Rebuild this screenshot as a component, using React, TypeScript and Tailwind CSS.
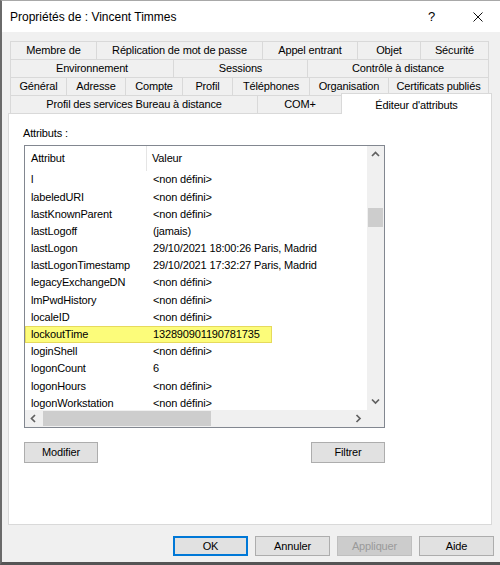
import React from "react";

type Tab = { label: string; w: string; selected?: boolean };

const rows: Tab[][] = [
  [
    { label: "Membre de", w: "w-[87px]" },
    { label: "Réplication de mot de passe", w: "w-[166px]" },
    { label: "Appel entrant", w: "w-[95px]" },
    { label: "Objet", w: "w-[63px]" },
    { label: "Sécurité", w: "w-[68px]" },
  ],
  [
    { label: "Environnement", w: "w-[164px]" },
    { label: "Sessions", w: "w-[134px]" },
    { label: "Contrôle à distance", w: "w-[181px]" },
  ],
  [
    { label: "Général", w: "w-[57px]" },
    { label: "Adresse", w: "w-[59px]" },
    { label: "Compte", w: "w-[57px]" },
    { label: "Profil", w: "w-[50px]" },
    { label: "Téléphones", w: "w-[77px]" },
    { label: "Organisation", w: "w-[79px]" },
    { label: "Certificats publiés", w: "w-[100px]" },
  ],
  [
    { label: "Profil des services Bureau à distance", w: "w-[248px]" },
    { label: "COM+", w: "w-[85px]" },
    { label: "Éditeur d'attributs", w: "w-[151px]", selected: true },
  ],
];

const attrs: [string, string, boolean?][] = [
  ["l", "<non défini>"],
  ["labeledURI", "<non défini>"],
  ["lastKnownParent", "<non défini>"],
  ["lastLogoff", "(jamais)"],
  ["lastLogon", "29/10/2021 18:00:26 Paris, Madrid"],
  ["lastLogonTimestamp", "29/10/2021 17:32:27 Paris, Madrid"],
  ["legacyExchangeDN", "<non défini>"],
  ["lmPwdHistory", "<non défini>"],
  ["localeID", "<non défini>"],
  ["lockoutTime", "132890901190781735", true],
  ["loginShell", "<non défini>"],
  ["logonCount", "6"],
  ["logonHours", "<non défini>"],
  ["logonWorkstation", "<non défini>"],
];

function Chevron({ dir }: { dir: "up" | "down" | "left" | "right" }) {
  const pts: Record<string, string> = {
    up: "1,6 4.5,2.5 8,6",
    down: "1,2.5 4.5,6 8,2.5",
    left: "6,1 2.5,4.5 6,8",
    right: "2.5,1 6,4.5 2.5,8",
  };
  return (
    <svg width="9" height="9" viewBox="0 0 9 9">
      <polyline points={pts[dir]} fill="none" stroke="#606060" strokeWidth="1.7" />
    </svg>
  );
}

function Btn({ label, cls }: { label: string; cls: string }) {
  return (
    <div className={`flex items-center justify-center box-border text-[11px] ${cls}`}>
      {label}
    </div>
  );
}

export default function App() {
  return (
    <div className="w-[500px] h-[565px] box-border flex flex-col bg-[#f0f0f0] border-l-2 border-b-[3px] border-t border-l-[#6a6a6a] border-b-[#555555] border-t-[#a8a8a8] font-['Liberation_Sans',Arial,sans-serif] text-black tracking-[-0.15px] overflow-hidden">
      {/* Title bar */}
      <div className="h-[31px] shrink-0 bg-white flex items-center pl-[8px]">
        <span className="text-[12px] tracking-normal">Propriétés de : Vincent Timmes</span>
        <div className="ml-auto flex items-center mr-[17px]">
          <span className="text-[13px] leading-none">?</span>
          <svg className="ml-[38px]" width="10" height="10" viewBox="0 0 10 10">
            <line x1="0.5" y1="0.5" x2="9.5" y2="9.5" stroke="#111" strokeWidth="1" />
            <line x1="9.5" y1="0.5" x2="0.5" y2="9.5" stroke="#111" strokeWidth="1" />
          </svg>
        </div>
      </div>

      {/* Body */}
      <div className="flex-1 flex flex-col">
        {/* Tabs */}
        <div className="mt-[9px] ml-[8px] flex flex-col">
          {rows.map((row, ri) => (
            <div key={ri} className="flex items-start h-[18px] box-border">
              {row.map((t, ti) =>
                t.selected ? (
                  <div
                    key={ti}
                    className={`${t.w} -ml-[2px] -mt-[2px] h-[21px] relative z-10 bg-white box-border border-t border-l border-r border-[#d9d9d9] flex items-start justify-center pt-[3px] text-[11px]`}
                  >
                    {t.label}
                  </div>
                ) : (
                  <div
                    key={ti}
                    className={`${t.w} h-[18px] box-border border-t border-r border-[#d9d9d9] ${ti === 0 ? "border-l" : ""} flex items-center justify-center text-[11px] whitespace-nowrap`}
                  >
                    {t.label}
                  </div>
                )
              )}
            </div>
          ))}
        </div>

        {/* Panel */}
        <div className="ml-[6px] w-[484px] h-[412px] box-border bg-white border border-[#d9d9d9] flex flex-col">
          <div className="ml-[14px] mt-[12px] h-[14px] leading-[14px] text-[11px]">Attributs :</div>

          {/* List box */}
          <div className="ml-[15px] mt-[5px] w-[361px] h-[283px] box-border border border-[#828790] flex flex-col">
            <div className="flex h-[264px]">
              <div className="w-[342px] h-[264px] overflow-hidden bg-white text-[11px]">
                <div className="flex h-[25px] items-center">
                  <div className="w-[122px] h-[25px] box-border pl-[6px] border-r border-[#e5e5e5] flex items-center">
                    Attribut
                  </div>
                  <div className="pl-[5px]">Valeur</div>
                </div>
                {attrs.map(([a, v, hl], i) => (
                  <div
                    key={i}
                    className={`flex items-center h-[17.2px] whitespace-nowrap ${
                      hl ? "w-[247px] bg-[#fcfc7a] shadow-[inset_0_0_0_1px_#e6da5c]" : ""
                    }`}
                  >
                    <div className="w-[122px] pl-[6px] shrink-0">{a}</div>
                    <div className="pl-[6px]">{v}</div>
                  </div>
                ))}
              </div>
              {/* Vertical scrollbar */}
              <div className="w-[17px] h-[264px] bg-[#f0f0f0] flex flex-col">
                <div className="h-[17px] flex items-center justify-center">
                  <Chevron dir="up" />
                </div>
                <div className="h-[45px]" />
                <div className="mx-[1px] h-[19px] bg-[#cdcdcd]" />
                <div className="flex-1" />
                <div className="h-[17px] flex items-center justify-center">
                  <Chevron dir="down" />
                </div>
              </div>
            </div>
            {/* Horizontal scrollbar */}
            <div className="flex h-[17px]">
              <div className="w-[342px] h-[17px] bg-[#f0f0f0] flex">
                <div className="w-[17px] flex items-center justify-center">
                  <Chevron dir="left" />
                </div>
                <div className="ml-[1px] my-[1px] w-[168px] bg-[#cdcdcd]" />
                <div className="flex-1" />
                <div className="w-[17px] flex items-center justify-center">
                  <Chevron dir="right" />
                </div>
              </div>
              <div className="w-[17px] h-[17px] bg-[#f0f0f0]" />
            </div>
          </div>

          <div className="ml-[15px] mt-[14px] w-[361px] flex justify-between">
            <Btn label="Modifier" cls="w-[74px] h-[21px] bg-[#e1e1e1] border border-[#adadad]" />
            <Btn label="Filtrer" cls="w-[74px] h-[21px] bg-[#e1e1e1] border border-[#adadad]" />
          </div>
        </div>

        {/* Bottom buttons */}
        <div className="mt-[11px] mr-[6px] flex justify-end gap-[7px]">
          <Btn label="OK" cls="w-[75px] h-[20px] bg-[#e1e1e1] border-2 border-[#0078d7]" />
          <Btn label="Annuler" cls="w-[75px] h-[20px] bg-[#e1e1e1] border border-[#adadad]" />
          <Btn label="Appliquer" cls="w-[75px] h-[20px] bg-[#cccccc] border border-[#bfbfbf] text-[#9a9a9a]" />
          <Btn label="Aide" cls="w-[75px] h-[20px] bg-[#e1e1e1] border border-[#adadad]" />
        </div>
      </div>
    </div>
  );
}
